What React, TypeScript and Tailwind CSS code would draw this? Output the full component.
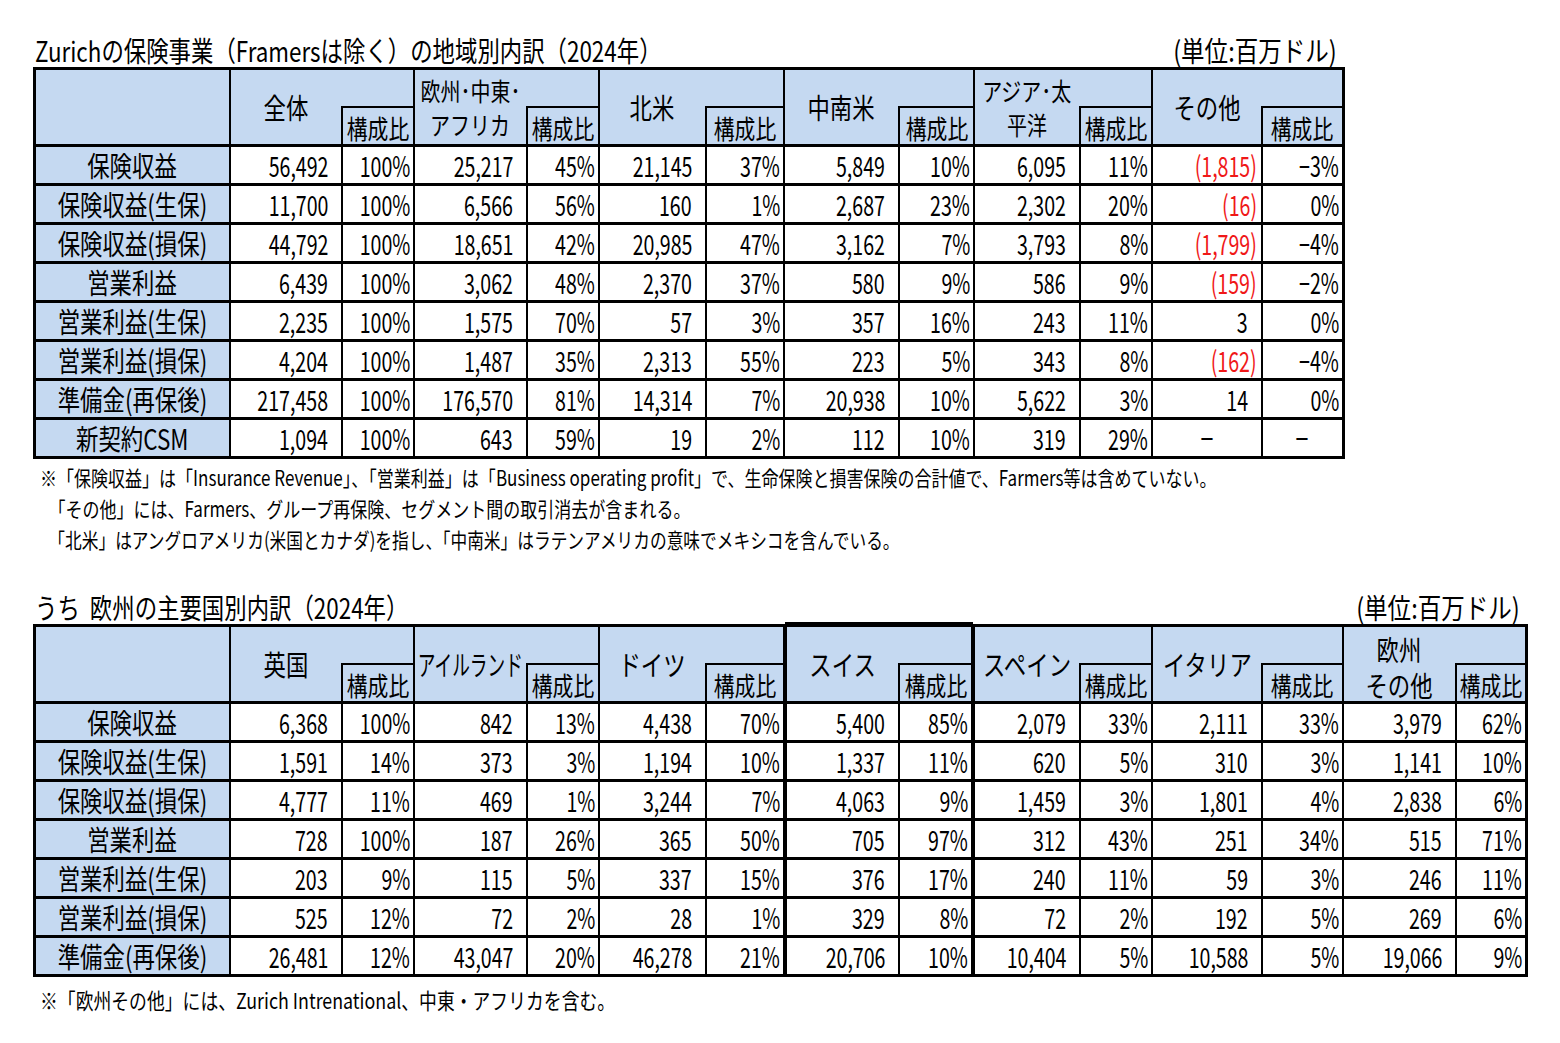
import type { ReactNode } from 'react'

type Group = { name: string[]; rw: string; tc?: string; box?: boolean }

const t1Cols =
  'grid-cols-[193px_110px_70px_111px_70px_105px_76px_113px_73px_104px_70px_108px_79px]'
const t2Cols =
  'grid-cols-[193px_110px_70px_111px_70px_105px_76px_113px_73px_104px_70px_108px_79px_111px_68px]'

const one = 'text-[28px] leading-none scale-x-[0.8]'
const two = 'text-[25px] leading-[34px] scale-x-[0.8]'

const groups1: Group[] = [
  { name: ['全体'], rw: 'w-[72px]' },
  { name: ['欧州･中東･', 'アフリカ'], rw: 'w-[72px]', tc: two },
  { name: ['北米'], rw: 'w-[78px]' },
  { name: ['中南米'], rw: 'w-[75px]' },
  { name: ['アジア･太', '平洋'], rw: 'w-[72px]', tc: two },
  { name: ['その他'], rw: 'w-[81px]' },
]

const groups2: Group[] = [
  { name: ['英国'], rw: 'w-[72px]' },
  { name: ['アイルランド'], rw: 'w-[72px]', tc: 'text-[28px] leading-none scale-x-[0.63]' },
  { name: ['ドイツ'], rw: 'w-[78px]' },
  { name: ['スイス'], rw: 'w-[73px]', box: true },
  { name: ['スペイン'], rw: 'w-[72px]' },
  { name: ['イタリア'], rw: 'w-[81px]' },
  { name: ['欧州', 'その他'], rw: 'w-[70px]', tc: 'text-[28px] leading-[36px] scale-x-[0.8] translate-y-[3px]' },
]

const rows1 = [
  ['保険収益', '56,492', '100%', '25,217', '45%', '21,145', '37%', '5,849', '10%', '6,095', '11%', '(1,815)', '−3%'],
  ['保険収益(生保)', '11,700', '100%', '6,566', '56%', '160', '1%', '2,687', '23%', '2,302', '20%', '(16)', '0%'],
  ['保険収益(損保)', '44,792', '100%', '18,651', '42%', '20,985', '47%', '3,162', '7%', '3,793', '8%', '(1,799)', '−4%'],
  ['営業利益', '6,439', '100%', '3,062', '48%', '2,370', '37%', '580', '9%', '586', '9%', '(159)', '−2%'],
  ['営業利益(生保)', '2,235', '100%', '1,575', '70%', '57', '3%', '357', '16%', '243', '11%', '3', '0%'],
  ['営業利益(損保)', '4,204', '100%', '1,487', '35%', '2,313', '55%', '223', '5%', '343', '8%', '(162)', '−4%'],
  ['準備金(再保後)', '217,458', '100%', '176,570', '81%', '14,314', '7%', '20,938', '10%', '5,622', '3%', '14', '0%'],
  ['新契約CSM', '1,094', '100%', '643', '59%', '19', '2%', '112', '10%', '319', '29%', '－', '－'],
]

const rows2 = [
  ['保険収益', '6,368', '100%', '842', '13%', '4,438', '70%', '5,400', '85%', '2,079', '33%', '2,111', '33%', '3,979', '62%'],
  ['保険収益(生保)', '1,591', '14%', '373', '3%', '1,194', '10%', '1,337', '11%', '620', '5%', '310', '3%', '1,141', '10%'],
  ['保険収益(損保)', '4,777', '11%', '469', '1%', '3,244', '7%', '4,063', '9%', '1,459', '3%', '1,801', '4%', '2,838', '6%'],
  ['営業利益', '728', '100%', '187', '26%', '365', '50%', '705', '97%', '312', '43%', '251', '34%', '515', '71%'],
  ['営業利益(生保)', '203', '9%', '115', '5%', '337', '15%', '376', '17%', '240', '11%', '59', '3%', '246', '11%'],
  ['営業利益(損保)', '525', '12%', '72', '2%', '28', '1%', '329', '8%', '72', '2%', '192', '5%', '269', '6%'],
  ['準備金(再保後)', '26,481', '12%', '43,047', '20%', '46,278', '21%', '20,706', '10%', '10,404', '5%', '10,588', '5%', '19,066', '9%'],
]

function HeadGroup({ g }: { g: Group }) {
  return (
    <div
      className={`col-span-2 flex bg-[#c5d9f1] ${g.box ? 'border-x-2 border-black shadow-[0_-5px_0_0_#000]' : ''}`}
    >
      <div className="flex min-w-0 flex-1 flex-col items-center justify-center">
        {g.name.map((n) => (
          <span key={n} className={`inline-block whitespace-nowrap ${g.tc ?? one}`}>
            {n}
          </span>
        ))}
      </div>
      <div className={`flex shrink-0 flex-col ${g.rw}`}>
        <div className="flex-1" />
        <div className="flex h-[38px] items-center justify-center border-l-2 border-t-2 border-black pt-[3px]">
          <span className="inline-block scale-x-[0.8] whitespace-nowrap text-[26px] leading-none">構成比</span>
        </div>
      </div>
    </div>
  )
}

function Val({ v, pct, boxL, boxR }: { v: string; pct: boolean; boxL?: boolean; boxR?: boolean }) {
  const red = v.startsWith('(')
  const dash = v === '－'
  const pad = dash
    ? 'justify-center'
    : pct
      ? 'justify-end pr-[3px]'
      : red
        ? 'justify-end pr-[4px]'
        : 'justify-end pr-[13px]'
  return (
    <div
      className={`flex h-[36px] items-center bg-white ${pad} ${boxL ? 'border-l-2 border-black' : ''} ${
        boxR ? 'border-r-2 border-black' : ''
      }`}
    >
      <span
        className={`inline-block whitespace-nowrap text-[28px] leading-none ${
          dash ? 'scale-x-[0.55]' : 'origin-right scale-x-[0.7]'
        } ${red ? 'text-[#f01818]' : ''}`}
      >
        {v}
      </span>
    </div>
  )
}

function Row({ r, boxIdx }: { r: string[]; boxIdx: number }) {
  return (
    <>
      <div className="flex h-[36px] items-center justify-center bg-[#c5d9f1]">
        <span className="inline-block scale-x-[0.8] whitespace-nowrap text-[28px] leading-none">{r[0]}</span>
      </div>
      {r.slice(1).map((v, i) => {
        const gi = Math.floor(i / 2)
        const pct = i % 2 === 1
        return <Val key={i} v={v} pct={pct} boxL={gi === boxIdx && !pct} boxR={gi === boxIdx && pct} />
      })}
    </>
  )
}

function Table({ cols, groups, rows }: { cols: string; groups: Group[]; rows: string[][] }) {
  const boxIdx = groups.findIndex((g) => g.box)
  return (
    <div className={`ml-[33px] grid w-fit gap-x-[2px] gap-y-[3px] bg-black p-[3px] ${cols}`}>
      <div className="h-[74px] bg-[#c5d9f1]" />
      {groups.map((g) => (
        <HeadGroup key={g.name.join('')} g={g} />
      ))}
      {rows.map((r) => (
        <Row key={r[0]} r={r} boxIdx={boxIdx} />
      ))}
    </div>
  )
}

function TitleRow({ title, w }: { title: string; w: string }) {
  return (
    <div className={`ml-[35px] flex h-[34px] items-center justify-between pr-[8px] ${w}`}>
      <span className="inline-block origin-left scale-x-[0.8] whitespace-nowrap text-[28px] leading-none">
        {title}
      </span>
      <span className="inline-block origin-right scale-x-[0.84] whitespace-nowrap text-[28px] leading-none">
        (単位:百万ドル)
      </span>
    </div>
  )
}

function Note({ children, cls = 'scale-x-[0.81] text-[21px]' }: { children: ReactNode; cls?: string }) {
  return (
    <div className="ml-[40px] h-[31px] leading-[31px]">
      <span className={`inline-block origin-left whitespace-nowrap ${cls}`}>{children}</span>
    </div>
  )
}

export default function App() {
  return (
    <div className="min-h-screen w-[1560px] bg-white pt-[33px] font-['Noto_Sans_CJK_JP',sans-serif] text-black">
      <TitleRow title="Zurichの保険事業（Framersは除く）の地域別内訳（2024年）" w="w-[1310px]" />
      <Table cols={t1Cols} groups={groups1} rows={rows1} />
      <div className="mt-[3px]">
        <Note>
          {'※「保険収益」は「Insurance Revenue」、「営業利益」は「Business operating profit」で、生命保険と損害保険の合計値で、Farmers等は含めていない。'}
        </Note>
        <Note>{'\u3000「その他」には、Farmers、グループ再保険、セグメント間の取引消去が含まれる。'}</Note>
        <Note cls="scale-x-[0.795] text-[21px]">
          {'\u3000「北米」はアングロアメリカ(米国とカナダ)を指し、「中南米」はラテンアメリカの意味でメキシコを含んでいる。'}
        </Note>
      </div>
      <div className="mt-[35px]">
        <TitleRow title={'うち\u00a0\u00a0欧州の主要国別内訳（2024年）'} w="w-[1493px]" />
      </div>
      <Table cols={t2Cols} groups={groups2} rows={rows2} />
      <div className="mt-[7px]">
        <Note cls="scale-x-[0.81] text-[22px]">{'※「欧州その他」には、Zurich Intrenational、中東・アフリカを含む。'}</Note>
      </div>
    </div>
  )
}
